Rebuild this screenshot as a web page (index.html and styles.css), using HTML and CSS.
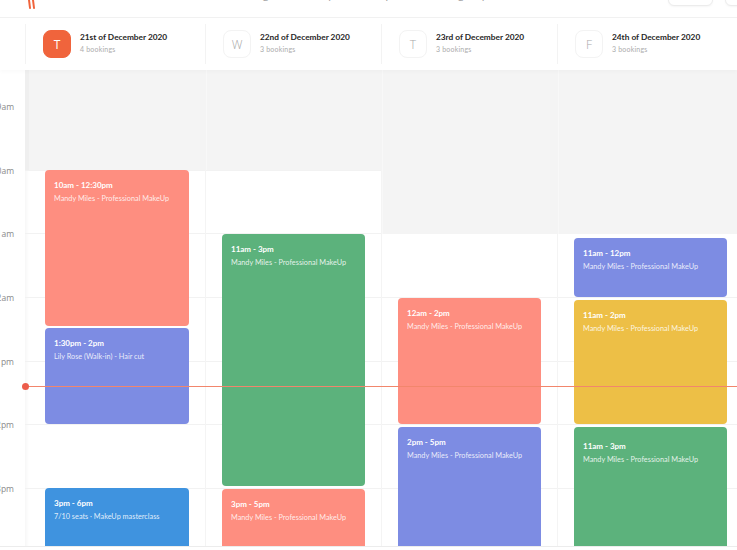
FILE: index.html
```html
<!DOCTYPE html>
<html lang="en">

<head>
      <meta charset="UTF-8">
      <meta name="viewport" content="width=device-width, initial-scale=1.0">
      <title>Calendar</title>
      <link rel="stylesheet" href="styles.css">
</head>

<body>
      <div class="topbar">
            <div class="logo">
                  <svg width="12" height="10" viewBox="0 0 12 10">
                        <path d="M2 0 L3 8 M6 0 L7 8" stroke="#f0643c" stroke-width="2" stroke-linecap="round" fill="none"/>
                  </svg>
            </div>
            <nav class="nav">
                  <span>Booking</span>
                  <span>Daily</span>
                  <span>Reports</span>
                  <span>Agency</span>
            </nav>
            <div class="top-actions">
                  <div class="pill"></div>
                  <div class="pill small"></div>
            </div>
      </div>

      <div class="days">
            <div class="gutter"></div>
            <div class="day">
                  <div class="avatar active">T</div>
                  <div>
                        <div class="day-title">21st of December 2020</div>
                        <div class="day-sub">4 bookings</div>
                  </div>
            </div>
            <div class="day">
                  <div class="avatar">W</div>
                  <div>
                        <div class="day-title">22nd of December 2020</div>
                        <div class="day-sub">3 bookings</div>
                  </div>
            </div>
            <div class="day">
                  <div class="avatar">T</div>
                  <div>
                        <div class="day-title">23rd of December 2020</div>
                        <div class="day-sub">3 bookings</div>
                  </div>
            </div>
            <div class="day">
                  <div class="avatar">F</div>
                  <div>
                        <div class="day-title">24th of December 2020</div>
                        <div class="day-sub">3 bookings</div>
                  </div>
            </div>
      </div>

      <div class="board">
            <div class="hours">
                  <div class="slot first"></div>
                  <div class="slot"><span>9am</span></div>
                  <div class="slot"><span>10am</span></div>
                  <div class="slot"><span>11am</span></div>
                  <div class="slot"><span>12am</span></div>
                  <div class="slot"><span>1pm</span></div>
                  <div class="slot"><span>2pm</span></div>
                  <div class="slot"><span>3pm</span></div>
            </div>

            <!-- day 1 -->
            <div class="col first-col">
                  <div class="slot first"></div>
                  <div class="slot"></div><div class="slot"></div><div class="slot"></div>
                  <div class="slot"></div><div class="slot"></div><div class="slot"></div><div class="slot"></div>
                  <div class="closed" style="height: 100px"></div>
                  <div class="event salmon" style="top: 100px; height: 156px">
                        <div class="ev-time">10am - 12:30pm</div>
                        <div class="ev-name">Mandy Miles - Professional MakeUp</div>
                  </div>
                  <div class="event violet" style="top: 258px; height: 96px">
                        <div class="ev-time">1:30pm - 2pm</div>
                        <div class="ev-name">Lily Rose (Walk-in) - Hair cut</div>
                  </div>
                  <div class="event blue" style="top: 418px; height: 90px">
                        <div class="ev-time">3pm - 6pm</div>
                        <div class="ev-name">7/10 seats · MakeUp masterclass</div>
                  </div>
            </div>

            <!-- day 2 -->
            <div class="col">
                  <div class="slot first"></div>
                  <div class="slot"></div><div class="slot"></div><div class="slot"></div>
                  <div class="slot"></div><div class="slot"></div><div class="slot"></div><div class="slot"></div>
                  <div class="closed" style="height: 100px"></div>
                  <div class="event green" style="top: 164px; height: 252px">
                        <div class="ev-time">11am - 3pm</div>
                        <div class="ev-name">Mandy Miles - Professional MakeUp</div>
                  </div>
                  <div class="event salmon" style="top: 419px; height: 90px">
                        <div class="ev-time">3pm - 5pm</div>
                        <div class="ev-name">Mandy Miles - Professional MakeUp</div>
                  </div>
            </div>

            <!-- day 3 -->
            <div class="col">
                  <div class="slot first"></div>
                  <div class="slot"></div><div class="slot"></div><div class="slot"></div>
                  <div class="slot"></div><div class="slot"></div><div class="slot"></div><div class="slot"></div>
                  <div class="closed" style="height: 164px"></div>
                  <div class="event salmon" style="top: 228px; height: 126px">
                        <div class="ev-time">12am - 2pm</div>
                        <div class="ev-name">Mandy Miles - Professional MakeUp</div>
                  </div>
                  <div class="event violet" style="top: 357px; height: 150px">
                        <div class="ev-time">2pm - 5pm</div>
                        <div class="ev-name">Mandy Miles - Professional MakeUp</div>
                  </div>
            </div>

            <!-- day 4 -->
            <div class="col last-col">
                  <div class="slot first"></div>
                  <div class="slot"></div><div class="slot"></div><div class="slot"></div>
                  <div class="slot"></div><div class="slot"></div><div class="slot"></div><div class="slot"></div>
                  <div class="closed" style="height: 164px"></div>
                  <div class="event violet" style="top: 168px; height: 59px">
                        <div class="ev-time">11am - 12pm</div>
                        <div class="ev-name">Mandy Miles - Professional MakeUp</div>
                  </div>
                  <div class="event yellow" style="top: 230px; height: 124px">
                        <div class="ev-time">11am - 2pm</div>
                        <div class="ev-name">Mandy Miles - Professional MakeUp</div>
                  </div>
                  <div class="event green roomy" style="top: 357px; height: 150px">
                        <div class="ev-time">11am - 3pm</div>
                        <div class="ev-name">Mandy Miles - Professional MakeUp</div>
                  </div>
            </div>

            <!-- current time -->
            <div class="now" style="top: 316px"></div>
      </div>
</body>

</html>
```

FILE: styles.css
```css
* {
      box-sizing: border-box;
      font-family: Lato, "Noto Sans", sans-serif;
}

body {
      margin: 0;
      padding: 0;
      width: 737px;
      height: 550px;
      overflow: hidden;
      background-color: #fff;
}

/* top navigation, scrolled mostly out of view */
.topbar {
      height: 18px;
      display: flex;
      align-items: flex-start;
      border-bottom: 1px solid #f1f1f1;
      overflow: hidden;
}

.logo {
      margin: -6px 0 0 27px;
}

.nav {
      display: flex;
      margin-left: 190px;
      margin-top: -12px;
      gap: 40px;
}

.nav span {
      font-size: 11px;
      color: #a0a0a0;
}

.top-actions {
      margin-left: auto;
      display: flex;
      gap: 12px;
      margin-top: -14px;
}

.pill {
      width: 45px;
      height: 20px;
      border: 1px solid #ececec;
      border-radius: 6px;
      background: #fff;
      box-shadow: 0 1px 2px rgba(0, 0, 0, 0.04);
}

.pill.small {
      width: 20px;
      margin-right: -8px;
}

/* day header */
.days {
      display: grid;
      grid-template-columns: 25px 180px 176px 176px 186px;
      height: 52px;
      background: #fff;
      box-shadow: 0 2px 4px rgba(0, 0, 0, 0.025);
      position: relative;
      z-index: 2;
}

.day {
      display: flex;
      align-items: center;
      gap: 9px;
      margin: 6px 0;
      padding-left: 17px;
      border-left: 1px solid #f3f3f3;
}

.avatar {
      width: 28px;
      height: 28px;
      border-radius: 8px;
      border: 1px solid #f3f3f3;
      display: flex;
      justify-content: center;
      align-items: center;
      font-size: 12px;
      font-family: "Open Sans", sans-serif;
      font-weight: 300;
      color: #a8a8a8;
      flex-shrink: 0;
}

.avatar.active {
      background-color: #f0643c;
      border-color: #f0643c;
      color: #fff;
      font-weight: normal;
}

.day-title {
      font-size: 8.3px;
      font-weight: bold;
      color: #262626;
      margin-top: -3px;
}

.day-sub {
      font-size: 7px;
      color: #acacac;
      margin-top: 3px;
      letter-spacing: 0.2px;
}

/* time grid */
.board {
      display: grid;
      grid-template-columns: 25px 180px 176px 176px 186px;
      height: 477px;
      overflow: hidden;
      position: relative;
      border-bottom: 1px solid #ececec;
}

.slot {
      height: 63.7px;
      border-top: 1px solid #f2f2f2;
}

.slot.first {
      height: 36px;
      border-top: none;
}

.hours .slot {
      border-top: none;
      position: relative;
}

.hours .slot span {
      position: absolute;
      right: 11px;
      top: -5px;
      font-size: 8.5px;
      font-family: "Open Sans", sans-serif;
      color: #8a8a8a;
      white-space: nowrap;
}

.col {
      position: relative;
      border-left: 1px solid #f4f4f4;
      padding: 0;
}

.first-col {
      border-left: none;
      box-shadow: inset 4px 0 3px -2px rgba(0, 0, 0, 0.035);
}

.closed {
      position: absolute;
      top: 0;
      left: 0;
      right: 0;
      background-color: #f4f4f4;
      border-left: 1px solid #f8f8f8;
}

.first-col .closed {
      border-left: 4px solid #efefef;
}

.event {
      position: absolute;
      left: 16px;
      right: 16px;
      border-radius: 4px;
      padding: 10px 9px;
      color: #fff;
}

.first-col .event {
      left: 20px;
}

.event.roomy {
      padding-top: 14px;
}

.ev-time {
      font-size: 8px;
      font-weight: bold;
}

.ev-name {
      font-size: 7.3px;
      margin-top: 4px;
      color: rgba(255, 255, 255, 0.85);
      white-space: nowrap;
}

.salmon {
      background-color: #fe8e80;
}

.violet {
      background-color: #7d8ce3;
}

.blue {
      background-color: #3f93df;
}

.green {
      background-color: #5cb27c;
}

.yellow {
      background-color: #edbf46;
}

.now {
      position: absolute;
      left: 25px;
      right: 0;
      height: 1px;
      background-color: #f2866c;
      z-index: 3;
}

.now::before {
      content: "";
      position: absolute;
      left: -3px;
      top: -3px;
      width: 7px;
      height: 7px;
      border-radius: 50%;
      background-color: #ec5d4b;
}
```
